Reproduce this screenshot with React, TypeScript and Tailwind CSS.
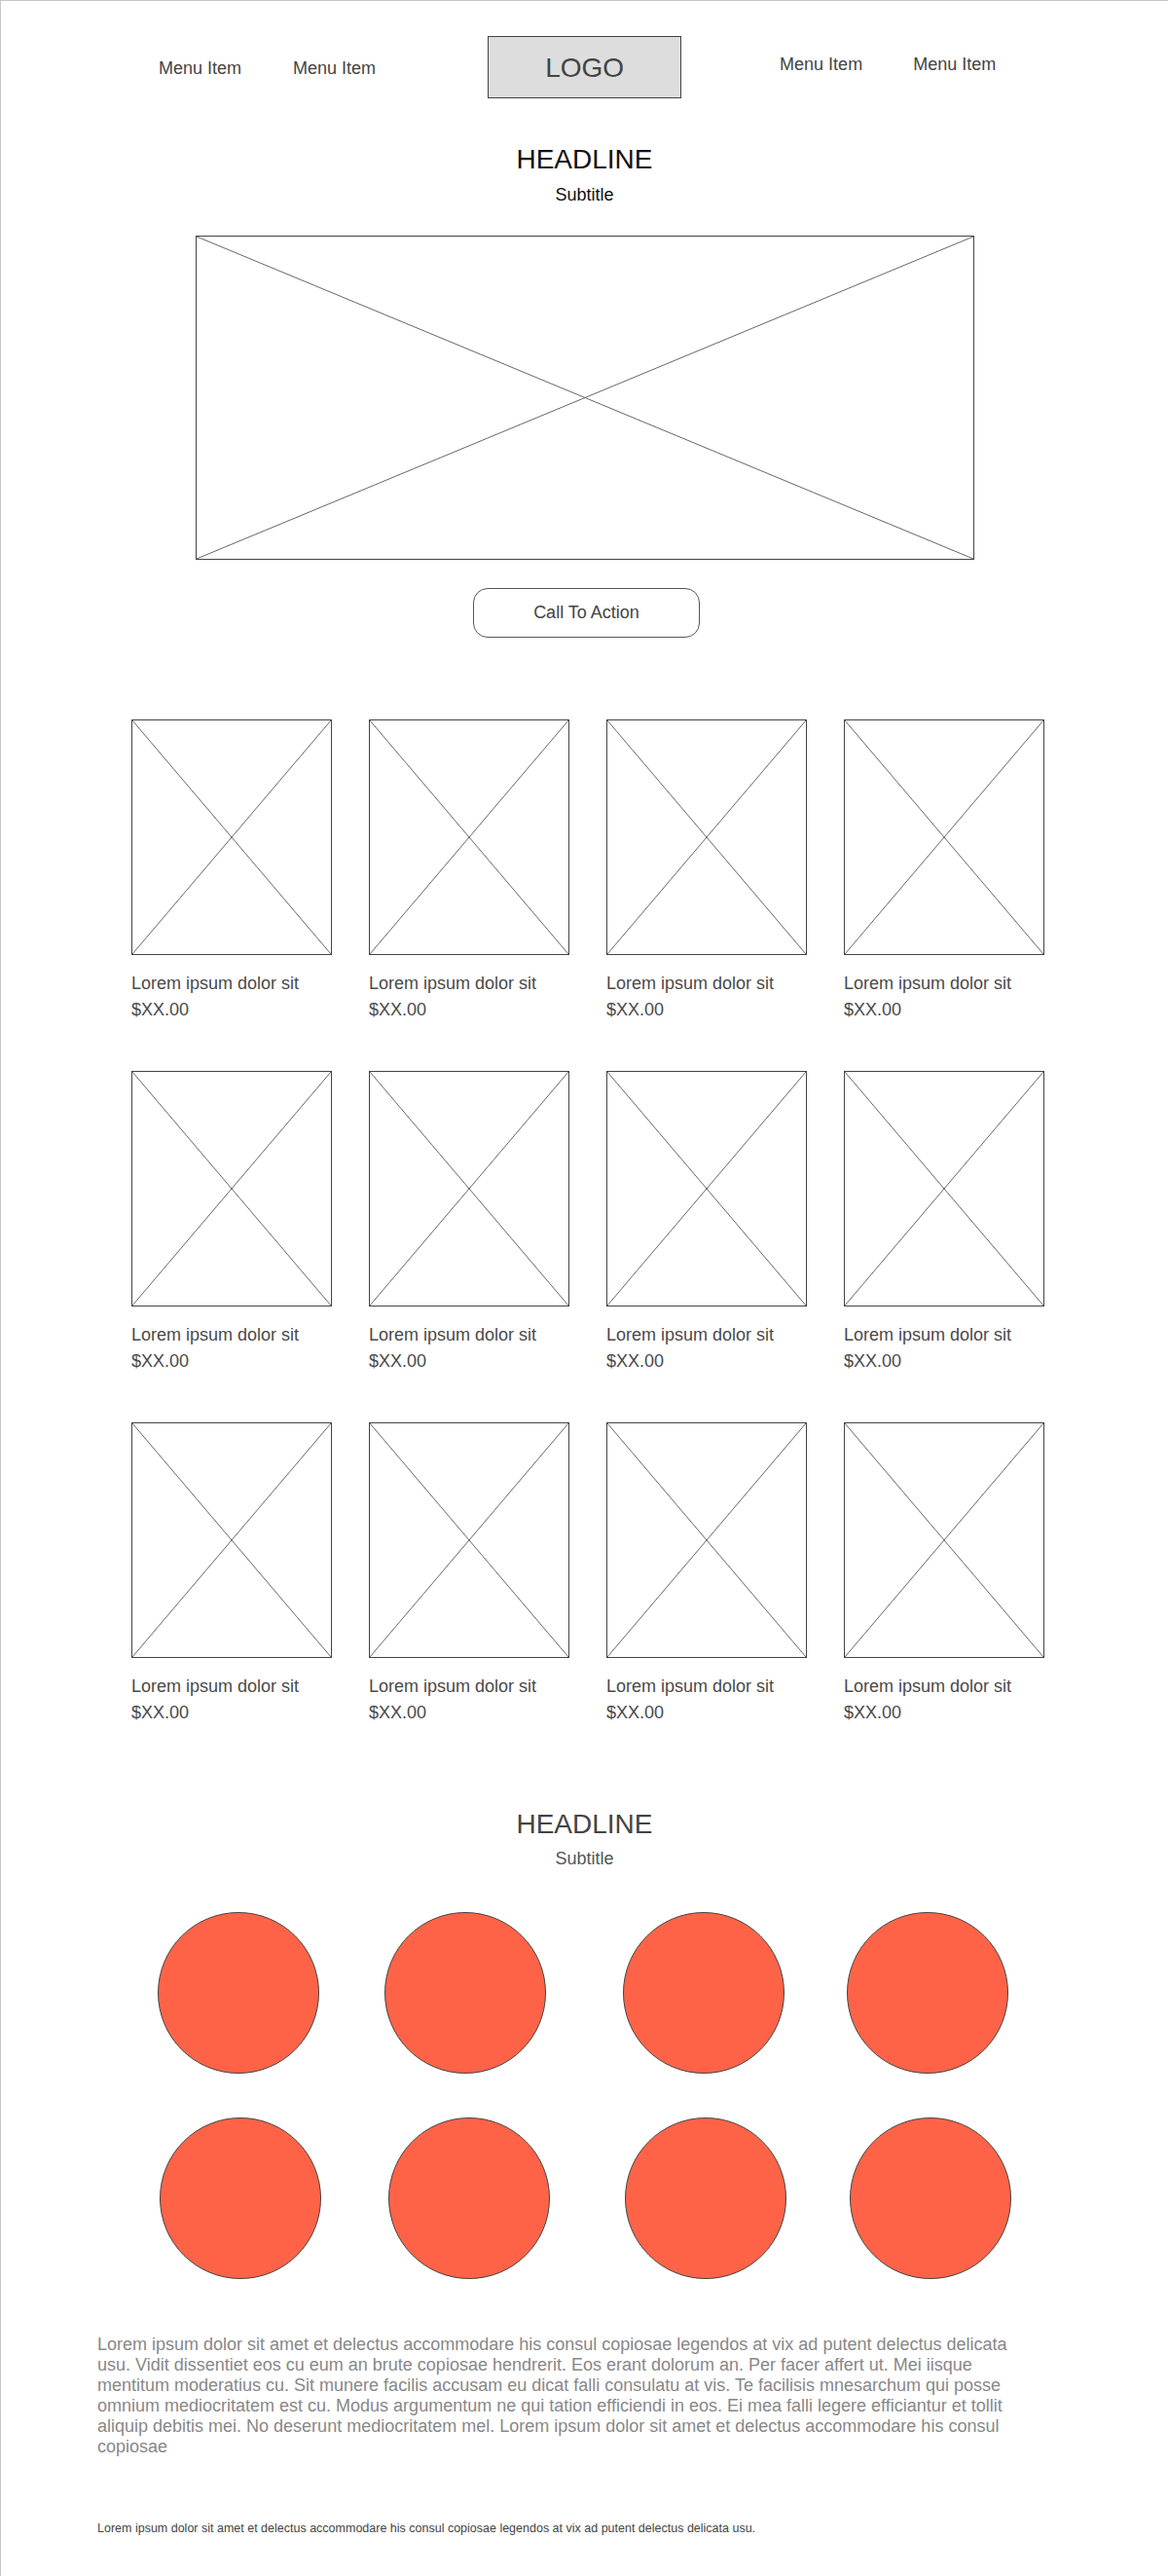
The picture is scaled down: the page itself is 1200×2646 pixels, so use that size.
import React from "react";

function Cross() {
  return (
    <svg className="absolute inset-0 w-full h-full" xmlns="http://www.w3.org/2000/svg">
      <line x1="0" y1="0" x2="100%" y2="100%" stroke="#666" strokeWidth="1" />
      <line x1="100%" y1="0" x2="0" y2="100%" stroke="#666" strokeWidth="1" />
    </svg>
  );
}

function Product() {
  return (
    <div className="flex flex-col">
      <div className="relative h-[242px] w-[206px] border border-[#444]">
        <Cross />
      </div>
      <div className="mt-[16px] text-[18px] leading-[27px] text-[#4a4a4a]">
        <p>Lorem ipsum dolor sit</p>
        <p>$XX.00</p>
      </div>
    </div>
  );
}

function Circle({ className }: { className: string }) {
  return (
    <div
      className={
        "h-[166px] w-[166px] shrink-0 rounded-full border border-[#444] bg-[#ff6347] " +
        className
      }
    />
  );
}

export default function App() {
  const products = Array.from({ length: 12 });
  return (
    <div className="h-[2646px] w-[1200px] overflow-hidden border-l border-t border-[#c8c8c8] bg-white font-['Liberation_Sans',Arial,sans-serif] text-[#444]">
      {/* Header */}
      <header className="mt-[36px] flex h-[64px] items-start text-[18px] leading-[21px]">
        <a className="ml-[162px] mt-[23px] whitespace-nowrap">Menu Item</a>
        <a className="ml-[53px] mt-[23px] whitespace-nowrap">Menu Item</a>
        <div className="ml-[115px] flex h-[64px] w-[199px] items-center justify-center border border-[#444] bg-[#dddddd] pt-[2px] text-[28px] leading-[32px] text-[#444]">
          LOGO
        </div>
        <a className="ml-[101px] mt-[19px] whitespace-nowrap">Menu Item</a>
        <a className="ml-[52px] mt-[19px] whitespace-nowrap">Menu Item</a>
      </header>

      {/* Hero */}
      <section className="flex flex-col">
        <h1 className="mt-[47px] text-center text-[28px] leading-[32px] text-[#111]">HEADLINE</h1>
        <p className="mt-[10px] text-center text-[18px] leading-[21px] text-[#111]">Subtitle</p>
        <div className="relative ml-[200px] mt-[31px] h-[333px] w-[800px] border border-[#444]">
          <Cross />
        </div>
        <button className="ml-[485px] mt-[29px] flex h-[51px] w-[233px] items-center justify-center rounded-[15px] border border-[#555] text-[18px] leading-[21px] text-[#444]">
          Call To Action
        </button>
      </section>

      {/* Products */}
      <section className="ml-[134px] mt-[84px] grid grid-cols-[repeat(4,206px)] gap-x-[38px] gap-y-[49px]">
        {products.map((_, i) => (
          <Product key={i} />
        ))}
      </section>

      {/* Second section */}
      <section className="flex flex-col">
        <h2 className="mt-[85px] text-center text-[28px] leading-[32px] text-[#444]">HEADLINE</h2>
        <p className="mt-[9px] text-center text-[18px] leading-[21px] text-[#555]">Subtitle</p>
        <div className="mt-[44px] flex">
          <Circle className="ml-[161px]" />
          <Circle className="ml-[67px]" />
          <Circle className="ml-[79px]" />
          <Circle className="ml-[64px]" />
        </div>
        <div className="mt-[45px] flex">
          <Circle className="ml-[163px]" />
          <Circle className="ml-[69px]" />
          <Circle className="ml-[77px]" />
          <Circle className="ml-[65px]" />
        </div>
      </section>

      {/* Text */}
      <p className="ml-[99px] mt-[57px] w-[945px] text-[18px] leading-[21px] text-[#888]">
        Lorem ipsum dolor sit amet et delectus accommodare his consul copiosae legendos at vix ad putent delectus delicata usu. Vidit dissentiet eos cu eum an brute copiosae hendrerit. Eos erant dolorum an. Per facer affert ut. Mei iisque mentitum moderatius cu. Sit munere facilis accusam eu dicat falli consulatu at vis. Te facilisis mnesarchum qui posse omnium mediocritatem est cu. Modus argumentum ne qui tation efficiendi in eos. Ei mea falli legere efficiantur et tollit aliquip debitis mei. No deserunt mediocritatem mel. Lorem ipsum dolor sit amet et delectus accommodare his consul copiosae
      </p>
      <p className="ml-[99px] mt-[66px] text-[12.5px] leading-[14px] text-[#444]">
        Lorem ipsum dolor sit amet et delectus accommodare his consul copiosae legendos at vix ad putent delectus delicata usu.
      </p>
    </div>
  );
}
